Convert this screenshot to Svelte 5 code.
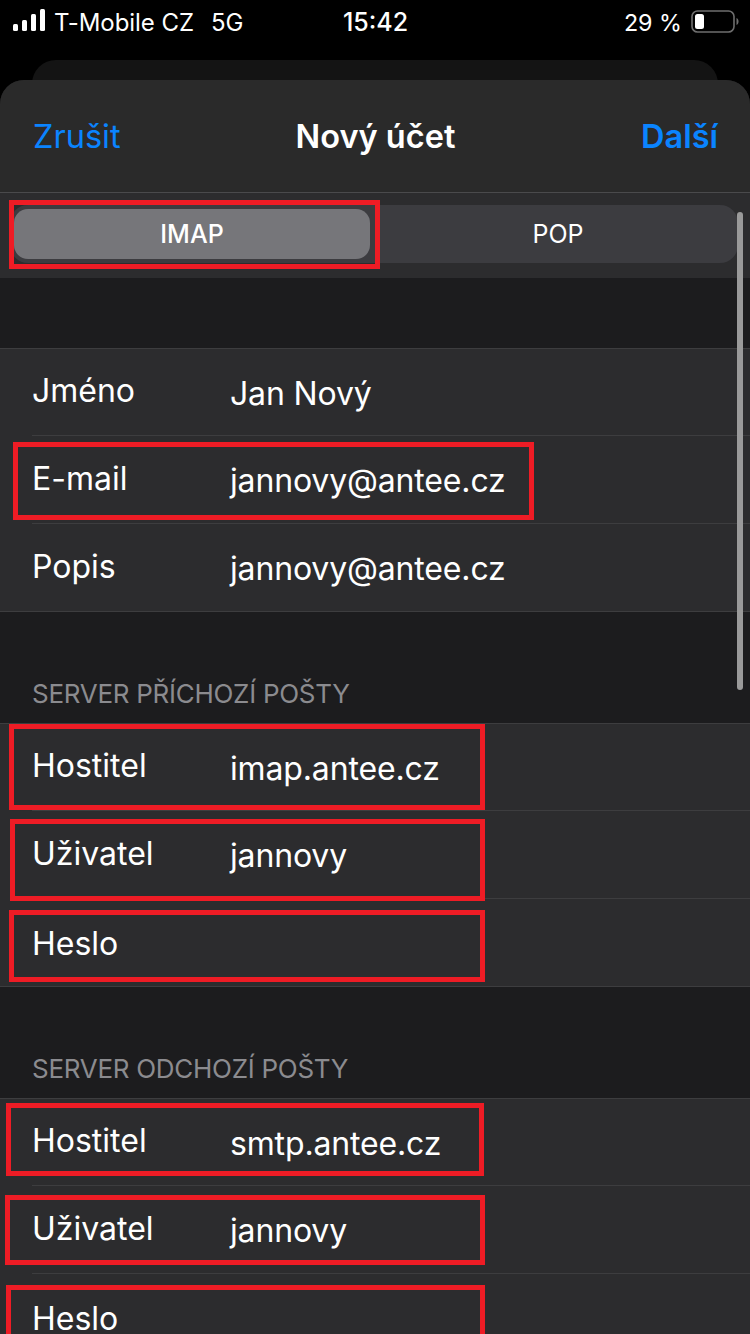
<script>
  const groups = [
    {
      title: null,
      rows: [
        { label: 'Jméno', value: 'Jan Nový' },
        { label: 'E-mail', value: 'jannovy@antee.cz' },
        { label: 'Popis', value: 'jannovy@antee.cz' }
      ]
    },
    {
      title: 'SERVER PŘÍCHOZÍ POŠTY',
      rows: [
        { label: 'Hostitel', value: 'imap.antee.cz' },
        { label: 'Uživatel', value: 'jannovy' },
        { label: 'Heslo', value: '' }
      ]
    },
    {
      title: 'SERVER ODCHOZÍ POŠTY',
      rows: [
        { label: 'Hostitel', value: 'smtp.antee.cz' },
        { label: 'Uživatel', value: 'jannovy' },
        { label: 'Heslo', value: '' }
      ]
    }
  ];

  // red annotation boxes drawn over the screenshot: x, y, w, h
  const marks = [
    [9, 200, 371, 69],
    [13, 442, 521, 78],
    [9, 724, 476, 86],
    [10, 819, 475, 82],
    [9, 910, 476, 72],
    [6, 1103, 478, 73],
    [5, 1195, 480, 70],
    [6, 1285, 479, 70]
  ];
</script>

<div class="screen">
  <div class="status">
    <div class="status-left">
      <svg class="signal" width="32" height="22" viewBox="0 0 32 22">
        <rect x="0" y="15" width="5" height="7" rx="1.5" />
        <rect x="9" y="11" width="5" height="11" rx="1.5" />
        <rect x="18" y="5" width="5" height="17" rx="1.5" />
        <rect x="27" y="0" width="5" height="22" rx="1.5" />
      </svg>
      <span>T-Mobile CZ</span>
      <span class="net">5G</span>
    </div>
    <div class="clock">15:42</div>
    <div class="status-right">
      <span>29 %</span>
      <svg class="battery" width="48" height="24" viewBox="0 0 48 24">
        <rect x="1" y="1" width="42" height="21" rx="5.5" fill="none" stroke="#6e6e6e" stroke-width="1.6" />
        <rect x="4" y="4" width="9" height="15" rx="2.5" fill="#fff" />
        <path d="M45.5 8v7c1.2-.4 2-1.900 2-3.500s-.8-3.100-2-3.500z" fill="#6e6e6e" />
      </svg>
    </div>
  </div>

  <div class="back-card"></div>

  <div class="sheet">
    <header class="nav">
      <span class="nav-btn">Zrušit</span>
      <span class="nav-title">Nový účet</span>
      <span class="nav-btn strong">Další</span>
    </header>

    <div class="seg-bar">
      <div class="segments">
        <div class="segment active">IMAP</div>
        <div class="segment">POP</div>
      </div>
    </div>

    {#each groups as group}
      <section class="group">
        <div class="group-head">
          {#if group.title}<span>{group.title}</span>{/if}
        </div>
        <div class="rows">
          {#each group.rows as row}
            <div class="row">
              <span class="label" class:blank={!row.value}>{row.label}</span>
              <span class="value">{row.value}</span>
            </div>
          {/each}
        </div>
      </section>
    {/each}
  </div>

  <div class="scrollbar"></div>

  {#each marks as [x, y, w, h]}
    <div class="mark" style="left:{x}px;top:{y}px;width:{w}px;height:{h}px"></div>
  {/each}
</div>

<style>
  :global(body) {
    margin: 0;
    background: #000;
  }

  .screen {
    position: relative;
    width: 750px;
    height: 1334px;
    overflow: hidden;
    background: #000;
    color: #fff;
    font-family: Inter, "Noto Sans", sans-serif;
  }

  .status {
    display: grid;
    grid-template-columns: 1fr auto 1fr;
    align-items: center;
    height: 44px;
    padding: 0 12px 0 13px;
    font-size: 24px;
    font-weight: 400;
  }

  .status-left {
    display: flex;
    align-items: center;
    gap: 9px;
    letter-spacing: -0.05px;
  }

  .signal {
    fill: #fff;
    margin-top: -4px;
  }

  .net {
    margin-left: 8px;
  }

  .clock {
    font-size: 25px;
    font-weight: 500;
  }

  .status-right {
    display: flex;
    align-items: center;
    justify-content: flex-end;
    gap: 9px;
    font-size: 23.3px;
  }

  .battery {
    margin-right: -1px;
  }

  .back-card {
    height: 36px;
    margin: 16px 32px -16px;
    border-radius: 24px 24px 0 0;
    background: #141414;
  }

  .sheet {
    position: relative;
    border-radius: 24px 24px 0 0;
    background: #1c1c1e;
    overflow: hidden;
  }

  .nav {
    display: grid;
    grid-template-columns: 1fr auto 1fr;
    align-items: center;
    height: 113px;
    padding: 0 32px 0 33px;
    box-sizing: border-box;
    border-bottom: 1px solid #4a4a4c;
    background: #2a2a2a;
    font-size: 32.5px;
  }

  .nav-btn {
    color: #0a84ff;
  }

  .nav-btn.strong {
    font-weight: 600;
    text-align: right;
  }

  .nav-title {
    font-weight: 600;
  }

  .seg-bar {
    height: 85px;
    padding: 12px 12px 0 10px;
    box-sizing: border-box;
    background: #2c2c2e;
  }

  .segments {
    display: grid;
    grid-template-columns: 368px 1fr;
    height: 58px;
    padding: 4px;
    box-sizing: border-box;
    border-radius: 18px;
    background: #3c3c40;
  }

  .segment {
    display: flex;
    align-items: center;
    justify-content: center;
    font-size: 25px;
    font-weight: 400;
  }

  .segment.active {
    width: 356px;
    border-radius: 14px;
    background: #76767a;
    font-weight: 500;
  }

  .group-head {
    display: flex;
    align-items: flex-end;
    height: 70px;
    padding: 0 32px 14px;
    box-sizing: border-box;
    font-size: 26px;
    letter-spacing: -0.28px;
    color: #8b8b8f;
  }

  .group + .group .group-head {
    height: 111px;
  }

  .rows {
    border-top: 1px solid #3d3d3f;
    border-bottom: 1px solid #3d3d3f;
    background: #2c2c2e;
  }

  .row {
    display: flex;
    height: 86px;
    margin-left: 32px;
    box-sizing: border-box;
    padding-top: 21px;
  }

  .row + .row {
    height: 88px;
    border-top: 1px solid #3d3d3f;
  }

  .label {
    width: 198px;
    font-size: 32px;
    line-height: 42px;
  }

  .row + .row .label {
    margin-top: 1px;
  }

  .row + .row .label.blank {
    margin-top: 3px;
  }

  .value {
    margin-top: 3px;
    font-size: 32px;
    letter-spacing: -0.15px;
    line-height: 42px;
  }

  .scrollbar {
    position: absolute;
    left: 737px;
    top: 212px;
    width: 6px;
    height: 478px;
    border-radius: 3px;
    background: #9a9a9a;
  }

  .mark {
    position: absolute;
    box-sizing: border-box;
    border: 5px solid #ee1c25;
  }
</style>
